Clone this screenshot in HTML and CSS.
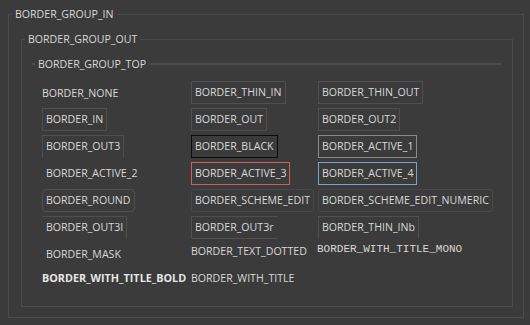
FILE: index.html
```html
<!DOCTYPE html>
<html>
<head>
<meta charset="utf-8">
<link rel="stylesheet" href="styles.css">
</head>
<body>
<fieldset class="group group-in">
  <legend class="legend">BORDER_GROUP_IN</legend>
  <fieldset class="group group-out">
    <legend class="legend">BORDER_GROUP_OUT</legend>
    <div class="top-title">
      <span class="top-line top-line-start"></span>
      <span class="top-text">BORDER_GROUP_TOP</span>
      <span class="top-line top-line-rest"></span>
    </div>
    <div class="grid">
      <span class="plain mid">BORDER_NONE</span>
      <span class="box b-thin">BORDER_THIN_IN</span>
      <span class="box b-thin">BORDER_THIN_OUT</span>

      <span class="box b-thin">BORDER_IN</span>
      <span class="box b-thin">BORDER_OUT</span>
      <span class="box b-thin">BORDER_OUT2</span>

      <span class="box b-out3">BORDER_OUT3</span>
      <span class="box b-black">BORDER_BLACK</span>
      <span class="box b-active1">BORDER_ACTIVE_1</span>

      <span class="box b-none">BORDER_ACTIVE_2</span>
      <span class="box b-active3">BORDER_ACTIVE_3</span>
      <span class="box b-active4">BORDER_ACTIVE_4</span>

      <span class="box b-round">BORDER_ROUND</span>
      <span class="box b-scheme">BORDER_SCHEME_EDIT</span>
      <span class="box b-scheme">BORDER_SCHEME_EDIT_NUMERIC</span>

      <span class="box b-out3i">BORDER_OUT3I</span>
      <span class="box b-out3r">BORDER_OUT3r</span>
      <span class="box b-thininb">BORDER_THIN_INb</span>

      <span class="box b-none">BORDER_MASK</span>
      <span class="plain">BORDER_TEXT_DOTTED</span>
      <span class="plain mono">BORDER_WITH_TITLE_MONO</span>

      <span class="plain bold">BORDER_WITH_TITLE_BOLD</span>
      <span class="plain">BORDER_WITH_TITLE</span>
    </div>
  </fieldset>
</fieldset>
</body>
</html>
```
FILE: styles.css
```css
html, body {
  margin: 0;
  padding: 0;
  background: #3b3b3b;
}
body {
  padding-top: 6px;
  font-family: "Open Sans", "Noto Sans", sans-serif;
  font-size: 10.6px;
  line-height: 16px;
  color: #d8d8d8;
}
.group {
  margin: 0;
  border: 1px solid #4b4b4b;
  min-width: 0;
}
.legend {
  padding: 0 3px;
  line-height: 16px;
}
.group-in {
  margin: 0 6px 0 8px;
  padding: 0 10px 10px 12px;
}
.group-in > .legend {
  margin-left: -9px;
}
.group-out {
  margin-top: 9px;
  padding: 0 11px 20px 10px;
}
.group-out > .legend {
  margin-left: -7px;
}
.top-title {
  display: flex;
  align-items: center;
  margin-top: 9px;
}
.top-line {
  height: 2px;
  background: #4d4d4d;
}
.top-line-start {
  width: 3px;
}
.top-line-rest {
  flex: 1;
}
.top-text {
  padding: 0 3px;
}
.grid {
  display: grid;
  grid-template-columns: 149px 127px auto;
  row-gap: 4px;
  margin: 9px 0 0 10px;
  align-items: start;
  justify-items: start;
}
.plain {
  white-space: nowrap;
}
.mid {
  align-self: center;
}
.mono {
  font-family: "Liberation Mono", monospace;
  font-size: 11px;
  line-height: 13px;
  margin-left: -1px;
}
.bold {
  font-weight: bold;
  font-size: 10.8px;
  color: #e6e6e6;
}
.box {
  border: 1px solid #4f4f4f;
  padding: 3px 3px;
  line-height: 15px;
  white-space: nowrap;
}
.b-none { border-color: transparent; }
.b-out3 { border-bottom-color: transparent; }
.b-out3i { border-bottom-color: transparent; border-left-color: transparent; }
.b-out3r { border-right-color: transparent; }
.b-thininb { border-bottom-color: transparent; }
.b-black { border-color: #0c0c0c; }
.b-active1 { border-color: #8a8a8a; }
.b-active3 { border-color: #d65c5c; }
.b-active4 { border-color: #7ea0d6; }
.b-round { border-radius: 4px; }
.b-scheme { border-radius: 3px; border-color: #484848; }
```
